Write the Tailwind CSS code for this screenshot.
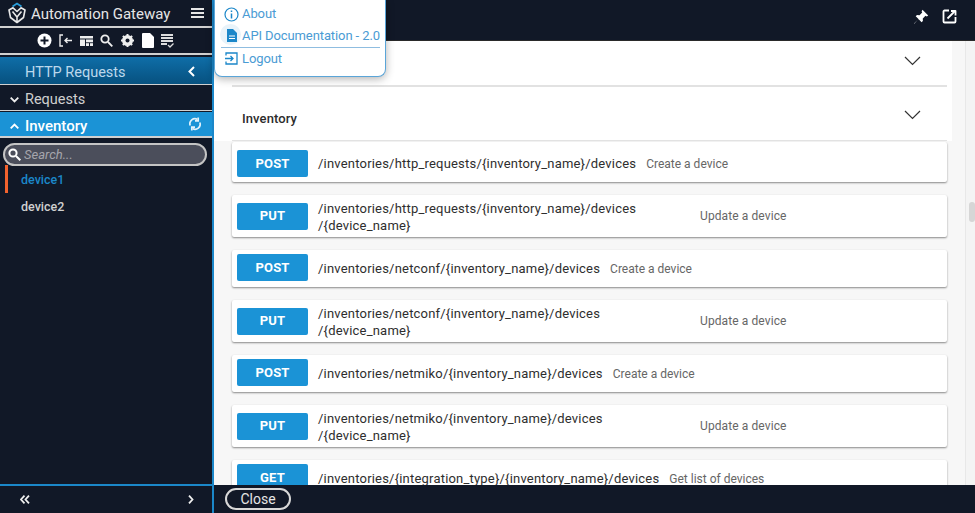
<!DOCTYPE html>
<html lang="en">
  <head>
    <meta charset="UTF-8">
    <title>Automation Gateway</title>
    <script src="https://cdn.jsdelivr.net/npm/@tailwindcss/browser@4"></script>
  </head>
  <body class="h-[513px] w-[975px] overflow-hidden bg-[#111827] font-['Roboto',sans-serif]">
    <div class="relative flex h-[513px]">
      <!-- Sidebar -->
      <aside class="flex h-full w-[214px] shrink-0 flex-col border-r-2 border-[#1b87c9] bg-[#111827]">
        <div class="flex h-[28px] items-center justify-between border-b-2 border-[#d0d0d0] pl-[8px] pr-[8px]">
          <div class="flex items-center gap-[5px]">
            <svg width="18" height="22" viewBox="0 0 18 22" fill="none">
              <path d="M4.500 4.500 9 1.500 13.500 4.500" stroke="#2a9fdc" stroke-width="1.800"/>
              <path d="M1 8 5 5.800 9 9.500 13 5.800 17 8 15.500 15.500 9 20.500 2.500 15.500Z" stroke="#e8e8e8" stroke-width="1.600" stroke-linejoin="round"/>
              <path d="M4.500 9.500 9 15 13.500 9.500M9 15V20" stroke="#e8e8e8" stroke-width="1.600"/>
            </svg>
            <span class="pt-[2px] text-[15px] text-[#e5e5e5]">Automation Gateway</span>
          </div>
          <svg width="13" height="10" viewBox="0 0 13 10" fill="#e5e5e5"><rect width="13" height="2"/><rect y="4" width="13" height="2"/><rect y="8" width="13" height="2"/></svg>
        </div>
        <div class="flex h-[27px] items-center gap-[7px] border-b-2 border-[#d0d0d0] pl-[37px]">
          <svg width="15" height="15" viewBox="0 0 15 15"><circle cx="7.500" cy="7.500" r="7" fill="#fff"/><path d="M7.500 3.500v8M3.500 7.500h8" stroke="#111827" stroke-width="2"/></svg>
          <svg width="14" height="13" viewBox="0 0 14 13" fill="none" stroke="#eee" stroke-width="1.400"><path d="M4 1H1v11h3M13 6.500H6M8.500 4 6 6.500 8.500 9"/></svg>
          <svg width="13" height="10" viewBox="0 0 13 10" fill="#eee"><rect width="13" height="2.500"/><rect y="3.500" width="5" height="6.500"/><rect x="6" y="3.500" width="7" height="2.800"/><rect x="6" y="7.200" width="3" height="2.800"/><rect x="10" y="7.200" width="3" height="2.800"/></svg>
          <svg width="13" height="13" viewBox="0 0 13 13" fill="none" stroke="#eee" stroke-width="1.800"><circle cx="5" cy="5" r="3.700"/><path d="M8 8l4.300 4.300"/></svg>
          <svg width="15" height="15" viewBox="0 0 15 15"><circle cx="7.500" cy="7.500" r="4" fill="none" stroke="#eee" stroke-width="3"/><path d="M7.500 1v13M1 7.500h13M2.900 2.900l9.200 9.200M12.100 2.900l-9.200 9.200" stroke="#eee" stroke-width="2"/><circle cx="7.500" cy="7.500" r="2" fill="#111827"/></svg>
          <svg width="12" height="15" viewBox="0 0 12 15" fill="#fff"><path d="M1 0h7l4 4v10a1 1 0 0 1-1 1H1a1 1 0 0 1-1-1V1a1 1 0 0 1 1-1Z"/></svg>
          <svg width="13" height="14" viewBox="0 0 13 14" fill="#ddd"><rect width="12" height="2"/><rect y="3" width="12" height="2"/><rect y="6" width="12" height="2"/><rect y="9" width="6" height="2"/><path d="M7 11l2 2 3.500-3.500" stroke="#ddd" fill="none" stroke-width="1.300"/></svg>
        </div>
        <div class="mt-[2px] flex h-[27px] items-center justify-between bg-gradient-to-b from-[#0f6ea8] to-[#07517f] pt-[4px] pl-[25px] pr-[17px] text-[14.500px] text-[#bcd8ec]">
          <span>HTTP Requests</span>
          <svg width="7" height="11" viewBox="0 0 7 11" fill="none" stroke="#fff" stroke-width="2" class="mb-[3px]"><path d="M6 1 1.500 5.500 6 10"/></svg>
        </div>
        <div class="flex h-[27px] items-center gap-[6px] border-y border-[#d0d0d0] pt-[4px] pl-[10px] text-[14.500px] text-[#cfcfcf]">
          <svg width="9" height="6" viewBox="0 0 9 6" fill="none" stroke="#eee" stroke-width="1.800"><path d="M.7.7 4.500 4.500 8.300.7"/></svg>
          <span>Requests</span>
        </div>
        <div class="mt-px flex h-[26px] items-center justify-between border-b-2 border-[#d0d0d0] bg-[#1b93d6] pt-[4px] pl-[10px] pr-[11px] text-[15px] font-medium text-white">
          <span class="flex items-center gap-[6px]">
            <svg width="9" height="6" viewBox="0 0 9 6" fill="none" stroke="#fff" stroke-width="1.800"><path d="M.7 5.300 4.500 1.500 8.300 5.300"/></svg>
            Inventory
          </span>
          <svg width="12" height="14" viewBox="0 0 12 14" fill="none" stroke="#e3f2fb" stroke-width="1.700" class="mb-[4px]"><path d="M1.200 8.500A5 5 0 0 1 8.500 2.500M10.800 5.500A5 5 0 0 1 3.500 11.500"/><path d="M9.200.5V3.800H6M2.800 13.500V10.200H6"/></svg>
        </div>
        <div class="mx-[3px] mt-[5px] flex h-[23px] w-[204px] items-center gap-[3px] rounded-full border-2 border-[#c4c4c4] bg-[#4b4e5b] pl-[3px] text-[13px] text-[#a5a5ac] italic">
          <svg width="13" height="13" viewBox="0 0 13 13" fill="none" stroke="#fff" stroke-width="2"><circle cx="5" cy="5" r="3.600"/><path d="M8 8l4.300 4.300"/></svg>
          <span>Search...</span>
        </div>
        <div class="-mt-px ml-[5px] flex h-[28px] items-center border-l-[3px] border-[#f2622e] pt-[2px] pl-[13px] text-[12.500px] font-medium text-[#1b87c9]">device1</div>
        <div class="flex h-[28px] items-center pl-[21px] text-[12.500px] font-medium text-[#cfcfcf]">device2</div>
        <div class="mt-auto flex h-[29px] items-center justify-between border-t-2 border-[#1b87c9] pl-[20px] pr-[18px] text-white">
          <svg width="10" height="9" viewBox="0 0 10 9" fill="none" stroke="#eee" stroke-width="1.800"><path d="M4.500.7 1 4.500 4.500 8.300M9 .7 5.500 4.500 9 8.300"/></svg>
          <svg width="6" height="9" viewBox="0 0 6 9" fill="none" stroke="#eee" stroke-width="1.800"><path d="M1 .7 4.500 4.500 1 8.300"/></svg>
        </div>
      </aside>

      <!-- Main panel -->
      <main class="flex h-full min-w-0 flex-1 flex-col">
        <div class="flex h-[41px] shrink-0 items-center justify-end gap-[13px] border-b border-[#2a2a2a] pr-[18px] pb-[7px]">
          <svg width="16" height="16" viewBox="0 0 16 16" fill="#fff"><path d="M9.500.8 15.200 6.500 13.800 7.400 12.500 6.800 9.800 9.500 9.900 12 8.600 13.200 5.400 10 1.300 14.700 1 14.400 5.500 10.100 2.700 7.300 4 6 6.500 6.200 9.200 3.500 8.600 2.200Z"/></svg>
          <svg width="15" height="15" viewBox="0 0 15 15" fill="none" stroke="#fff" stroke-width="1.800" stroke-linejoin="round"><path d="M7 1.500H2.500a1 1 0 0 0-1 1V12.500a1 1 0 0 0 1 1H12.500a1 1 0 0 0 1-1V8"/><path d="M5.500 9.500 12.500 2.500"/><path d="M9 2h4.500v4.500"/></svg>
        </div>
        <div class="flex min-h-0 flex-1 bg-[#f7f7f7]">
          <div class="min-w-0 flex-1 overflow-hidden">
            <div class="h-[46px] w-[738px] bg-white pr-[5px] pl-[18px]">
              <div class="flex h-[46px] items-center justify-end border-b-2 border-[#e2e2e2] pr-[26px] pb-[4px]">
                <svg width="17" height="10" viewBox="0 0 17 10" fill="none" stroke="#333" stroke-width="1.200"><path d="M1 1l7.500 7.500L16 1"/></svg>
              </div>
            </div>
            <div class="w-[738px] bg-white pr-[5px] pl-[18px]">
              <div class="flex h-[54px] items-center justify-between border-b border-[#e2e2e2] pt-[10px] pr-[26px] pl-[10px] text-[13px] font-medium tracking-[.1px] text-[#2c2c2c]">
                <span>Inventory</span>
                <svg width="17" height="10" viewBox="0 0 17 10" fill="none" stroke="#333" stroke-width="1.200" class="mb-[8px]"><path d="M1 1l7.500 7.500L16 1"/></svg>
              </div>
            </div>
            <div class="ml-[18px] flex w-[715px] flex-col gap-[13px] pt-[1px] text-[13px] tracking-[.2px] text-[#2e2e2e]">
              <div class="flex h-[40px] items-center rounded-[2px] bg-white pt-[3px] pl-[5px] shadow-[0_1px_2px_rgba(0,0,0,.45)]">
                <span class="flex h-[27px] w-[71px] items-center justify-center rounded-[2px] bg-[#1b93d6] text-[13px] font-bold text-white">POST</span>
                <span class="ml-[10px]">/inventories/http_requests/{inventory_name}/devices</span>
                <span class="ml-[10px] text-[12px] tracking-normal text-[#666]">Create a device</span>
              </div>
              <div class="flex h-[42px] items-center rounded-[2px] bg-white pl-[5px] shadow-[0_1px_2px_rgba(0,0,0,.45)]">
                <span class="flex h-[27px] w-[71px] items-center justify-center rounded-[2px] bg-[#1b93d6] text-[13px] font-bold text-white">PUT</span>
                <span class="ml-[10px] w-[382px] pt-[1px] leading-[17px]">/inventories/http_requests/{inventory_name}/devices<br>/{device_name}</span>
                <span class="text-[12px] tracking-[.1px] text-[#666]">Update a device</span>
              </div>
              <div class="flex h-[37px] items-center rounded-[2px] bg-white pl-[5px] shadow-[0_1px_2px_rgba(0,0,0,.45)]">
                <span class="mb-[2px] flex h-[27px] w-[71px] items-center justify-center rounded-[2px] bg-[#1b93d6] text-[13px] font-bold text-white">POST</span>
                <span class="ml-[10px]">/inventories/netconf/{inventory_name}/devices</span>
                <span class="ml-[10px] text-[12px] tracking-normal text-[#666]">Create a device</span>
              </div>
              <div class="flex h-[42px] items-center rounded-[2px] bg-white pl-[5px] shadow-[0_1px_2px_rgba(0,0,0,.45)]">
                <span class="flex h-[27px] w-[71px] items-center justify-center rounded-[2px] bg-[#1b93d6] text-[13px] font-bold text-white">PUT</span>
                <span class="ml-[10px] w-[382px] pt-[1px] leading-[17px]">/inventories/netconf/{inventory_name}/devices<br>/{device_name}</span>
                <span class="text-[12px] tracking-[.1px] text-[#666]">Update a device</span>
              </div>
              <div class="flex h-[37px] items-center rounded-[2px] bg-white pl-[5px] shadow-[0_1px_2px_rgba(0,0,0,.45)]">
                <span class="mb-[2px] flex h-[27px] w-[71px] items-center justify-center rounded-[2px] bg-[#1b93d6] text-[13px] font-bold text-white">POST</span>
                <span class="ml-[10px]">/inventories/netmiko/{inventory_name}/devices</span>
                <span class="ml-[10px] text-[12px] tracking-normal text-[#666]">Create a device</span>
              </div>
              <div class="flex h-[42px] items-center rounded-[2px] bg-white pl-[5px] shadow-[0_1px_2px_rgba(0,0,0,.45)]">
                <span class="flex h-[27px] w-[71px] items-center justify-center rounded-[2px] bg-[#1b93d6] text-[13px] font-bold text-white">PUT</span>
                <span class="ml-[10px] w-[382px] pt-[1px] leading-[17px]">/inventories/netmiko/{inventory_name}/devices<br>/{device_name}</span>
                <span class="text-[12px] tracking-[.1px] text-[#666]">Update a device</span>
              </div>
              <div class="flex h-[37px] items-center rounded-[2px] bg-white pl-[5px] shadow-[0_1px_2px_rgba(0,0,0,.45)]">
                <span class="mb-[2px] flex h-[27px] w-[71px] items-center justify-center rounded-[2px] bg-[#1b93d6] text-[13px] font-bold text-white">GET</span>
                <span class="ml-[10px]">/inventories/{integration_type}/{inventory_name}/devices</span>
                <span class="ml-[10px] text-[12px] tracking-normal text-[#666]">Get list of devices</span>
              </div>
            </div>
          </div>
          <div class="relative w-[10px] shrink-0 border-l border-[#e8e8e8] bg-[#f4f4f4]">
            <div class="absolute top-[161px] left-[3px] h-[20px] w-[6px] rounded-[3px] bg-[#d6d6d6]"></div>
          </div>
        </div>
        <div class="relative z-10 flex h-[28px] shrink-0 items-center bg-[#111827] pl-[11px]">
          <button class="flex h-[22px] w-[66px] items-center justify-center rounded-full border-2 border-[#d8d8d8] text-[14px] text-[#e5e5e5]">Close</button>
        </div>
      </main>

      <!-- User menu -->
      <div class="absolute top-0 left-[214px] z-20 h-[77px] w-[172px] rounded-b-[8px] border border-t-0 border-[#5aa5d8] bg-white pt-[5px] pl-[6px] text-[13px] tracking-[-.1px] text-[#4a9bd4] shadow-[0_2px_8px_rgba(0,0,0,.3)]">
        <div class="flex h-[18px] items-center gap-[3px] pl-[3px]">
          <svg width="15" height="15" viewBox="0 0 15 15" fill="none" stroke="#1b87c9" stroke-width="1.200" class="shrink-0"><circle cx="7.500" cy="7.500" r="6.500"/><path d="M7.500 6.500v5M7.500 3.500v1.500" stroke-width="1.500"/></svg>
          <span>About</span>
        </div>
        <div class="relative mt-[3px] flex h-[22px] w-[159px] items-center gap-[3px] border-b border-[#8fbde0] pb-[2px] pl-[3px] whitespace-nowrap">
          <span class="absolute top-[-2px] left-[-1px] h-[21px] w-[21px] rounded-full bg-[#e8f3fa]"></span>
          <svg width="15" height="15" viewBox="0 0 15 15" fill="#1b87c9" class="relative shrink-0"><path d="M3 1h6l4 4v9H3Z"/><path d="M5 8h6M5 10.500h6" stroke="#fff"/></svg>
          <span>API Documentation - 2.0</span>
        </div>
        <div class="mt-px flex h-[19px] items-center gap-[3px] pl-[3px]">
          <svg width="15" height="15" viewBox="0 0 15 15" fill="none" stroke="#1b87c9" stroke-width="1.300" class="shrink-0"><path d="M2 4.500V2h11v11H2v-2.500M1 7.500h8M6.500 5 9 7.500 6.500 10"/></svg>
          <span>Logout</span>
        </div>
      </div>
    </div>
  </body>
</html>
